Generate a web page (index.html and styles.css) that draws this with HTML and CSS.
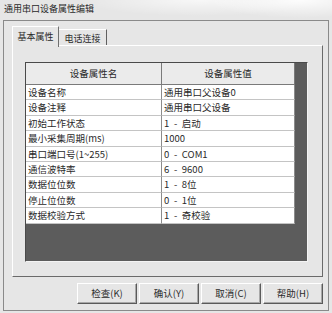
FILE: index.html
```html
<!DOCTYPE html>
<html lang="zh-CN">
<head>
<meta charset="utf-8">
<title>通用串口设备属性编辑</title>
<link rel="stylesheet" href="styles.css">
</head>
<body>
<div class="win">
  <div class="title">通用串口设备属性编辑</div>
  <div class="frame">
    <div class="tabs">
      <div class="tab active">基本属性</div>
      <div class="tab">电话连接</div>
    </div>
    <div class="panel">
      <div class="grid">
        <div class="hcell">设备属性名</div>
        <div class="hcell">设备属性值</div>
        <div class="cell">设备名称</div><div class="cell val">通用串口父设备0</div>
        <div class="cell">设备注释</div><div class="cell val">通用串口父设备</div>
        <div class="cell">初始工作状态</div><div class="cell val">1 - 启动</div>
        <div class="cell">最小采集周期(ms)</div><div class="cell val">1000</div>
        <div class="cell">串口端口号(1~255)</div><div class="cell val">0 - COM1</div>
        <div class="cell">通信波特率</div><div class="cell val">6 - 9600</div>
        <div class="cell">数据位位数</div><div class="cell val">1 - 8位</div>
        <div class="cell">停止位位数</div><div class="cell val">0 - 1位</div>
        <div class="cell">数据校验方式</div><div class="cell val">1 - 奇校验</div>
      </div>
    </div>
    <div class="buttons">
      <div class="btn">检查(K)</div>
      <div class="btn">确认(Y)</div>
      <div class="btn">取消(C)</div>
      <div class="btn">帮助(H)</div>
    </div>
  </div>
</div>
</body>
</html>
```
FILE: styles.css
```css
* { box-sizing: border-box; margin: 0; padding: 0; }
html, body { width: 332px; height: 313px; overflow: hidden; }
body {
  background: #e6e6e6;
  font-family: "Noto Sans CJK SC", sans-serif;
  color: #2a2a2a;
  font-size: 9.5px;
}
.win {
  width: 332px;
  height: 313px;
  display: flex;
  flex-direction: column;
  background:
    radial-gradient(ellipse 90px 18px at 300px 0px, rgba(255,255,255,0.9), rgba(255,255,255,0) 100%),
    radial-gradient(ellipse 120px 16px at 200px 0px, rgba(255,255,255,0.7), rgba(255,255,255,0) 100%),
    #e6e6e6;
}
.title {
  height: 20px;
  padding: 3px 0 0 4px;
  font-size: 9px;
  line-height: 12px;
}
.frame {
  margin: 0 3px 2px 3px;
  height: 291px;
  border: 1px solid #8a8a8a;
  padding: 5px 5px 0 8px;
  display: flex;
  flex-direction: column;
  background: #e6e6e6;
}
.tabs {
  height: 19px;
  display: flex;
  align-items: flex-start;
}
.tab {
  font-size: 9px;
  line-height: 14px;
  text-align: center;
  background: #e6e6e6;
}
.tab.active {
  position: relative;
  z-index: 1;
  width: 47px;
  height: 21px;
  padding-top: 3px;
  border-left: 1px solid #ffffff;
  border-top: 1px solid #ffffff;
  border-right: 1px solid #707070;
}
.tab:not(.active) {
  margin-top: 3px;
  width: 48px;
  height: 16px;
  padding-top: 2px;
  border-top: 1px solid #ffffff;
  border-right: 1px solid #606060;
}
.panel {
  width: 311px;
  height: 232px;
  border-left: 1px solid #ffffff;
  border-top: 1px solid #ffffff;
  border-right: 1px solid #6a6a6a;
  border-bottom: 1px solid #6a6a6a;
  padding: 16px 0 0 12px;
}
.grid {
  width: 283px;
  height: 200px;
  background: #5c5c5c;
  border-top: 1px solid #4a4a4a;
  border-left: 1px solid #4a4a4a;
  border-right: 1px solid #f4f4f4;
  border-bottom: 1px solid #f4f4f4;
  display: grid;
  grid-template-columns: 136px 133px;
  grid-template-rows: 22px repeat(9, 15.4px);
  align-content: start;
}
.hcell {
  background: #ebebeb;
  border-right: 1px solid #7a7a7a;
  border-bottom: 1px solid #7a7a7a;
  text-align: center;
  line-height: 21px;
}
.cell {
  background: #ffffff;
  border-right: 1px solid #8c8c8c;
  border-bottom: 1px solid #c4c4c4;
  padding-left: 2px;
  line-height: 14.4px;
  white-space: nowrap;
  overflow: hidden;
}
.cell.val {
  word-spacing: 2.5px;
}
.buttons {
  margin-top: 6px;
  display: flex;
  justify-content: flex-end;
  gap: 2px;
}
.btn {
  width: 60px;
  height: 21px;
  border-left: 1px solid #ffffff;
  border-top: 1px solid #ffffff;
  border-right: 1px solid #5a5a5a;
  border-bottom: 1px solid #5a5a5a;
  box-shadow: inset -1px -1px 0 #a8a8a8;
  text-align: center;
  line-height: 18px;
}
```
